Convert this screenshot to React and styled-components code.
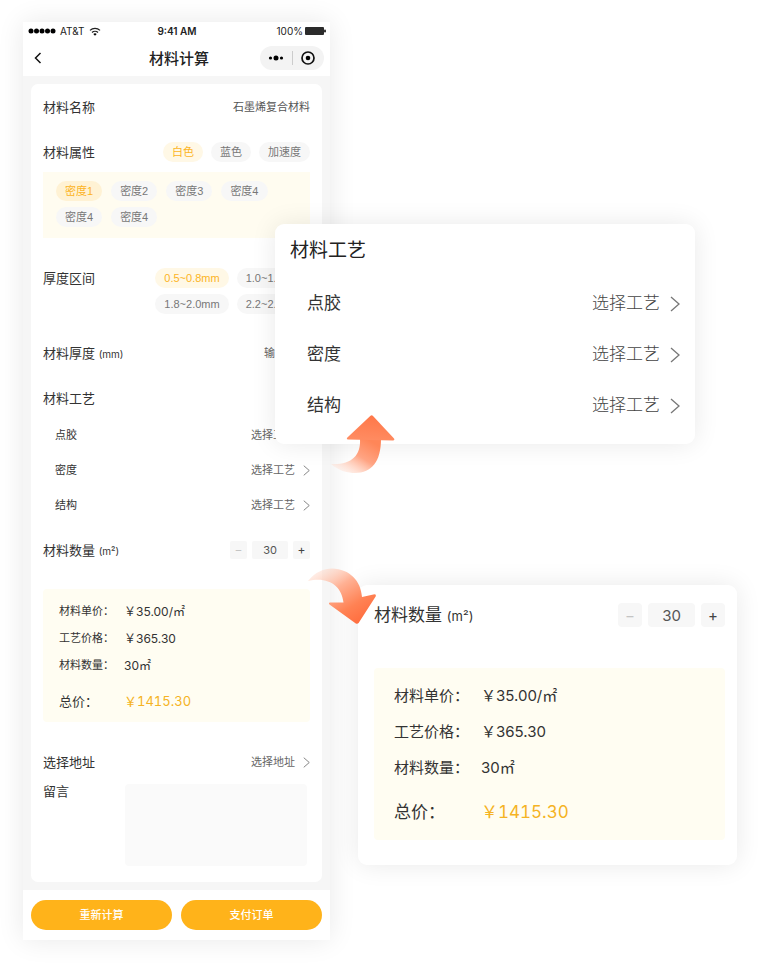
import React, { useState } from 'react';
import styled, { createGlobalStyle, css } from 'styled-components';

const COLORS = ['白色', '蓝色', '加速度'];
const DENSITIES = ['密度1', '密度2', '密度3', '密度4', '密度4', '密度4'];
const RANGES = ['0.5~0.8mm', '1.0~1.5mm', '1.8~2.0mm', '2.2~2.5mm'];
const CRAFTS = ['点胶', '密度', '结构'];

const ChipGroup = ({ items }) => {
  const [active, setActive] = useState(0);
  return items.map((item, index) => (
    <Chip
      key={index}
      type="button"
      $active={index === active}
      onClick={() => setActive(index)}
    >
      {item}
    </Chip>
  ));
};

const Arrow = ({ large }) => (
  <Chevron viewBox="0 0 10 16" $large={large} aria-hidden="true">
    <path d="M1 1l8 7-8 7" />
  </Chevron>
);

const CraftList = ({ large }) =>
  CRAFTS.map(name => (
    <CraftRow key={name} $large={large}>
      <span>{name}</span>
      <Picker type="button" $large={large} aria-label={`${name} 选择工艺`}>
        选择工艺
        <Arrow large={large} />
      </Picker>
    </CraftRow>
  ));

const Quantity = ({ large, count, setCount }) => (
  <Stepper $large={large}>
    <StepButton
      type="button"
      $large={large}
      $muted
      aria-label="减少"
      onClick={() => setCount(Math.max(0, Number(count) - 1))}
    >
      −
    </StepButton>
    <StepInput
      $large={large}
      aria-label="材料数量"
      value={count}
      onChange={e => setCount(e.target.value)}
    />
    <StepButton
      type="button"
      $large={large}
      aria-label="增加"
      onClick={() => setCount(Number(count) + 1)}
    >
      +
    </StepButton>
  </Stepper>
);

const Summary = ({ large, count }) => (
  <SummaryBox $large={large}>
    <SummaryLine $large={large}>
      <dt>材料单价：</dt>
      <dd>￥35.00/㎡</dd>
    </SummaryLine>
    <SummaryLine $large={large}>
      <dt>工艺价格：</dt>
      <dd>￥365.30</dd>
    </SummaryLine>
    <SummaryLine $large={large}>
      <dt>材料数量：</dt>
      <dd>{count}㎡</dd>
    </SummaryLine>
    <TotalLine $large={large}>
      <dt>总价：</dt>
      <dd>￥1415.30</dd>
    </TotalLine>
  </SummaryBox>
);

const App = () => {
  const [count, setCount] = useState(30);

  return (
    <Stage>
      <GlobalStyle />
      <Phone>
        <StatusBar>
          <Carrier>
            <svg width="28" height="6" viewBox="0 0 28 6" aria-hidden="true">
              {[3, 8.5, 14, 19.5, 25].map(x => (
                <circle key={x} cx={x} cy="3" r="2.5" />
              ))}
            </svg>
            AT&T
            <svg width="12" height="9" viewBox="0 0 12 9" aria-hidden="true">
              <g fill="none" stroke="#222" strokeWidth="1.3">
                <path d="M1 3.4a7.2 7.2 0 0 1 10 0" />
                <path d="M3 5.5a4.3 4.3 0 0 1 6 0" />
              </g>
              <path d="M6 8.8L4.3 7a2.4 2.4 0 0 1 3.4 0z" />
            </svg>
          </Carrier>
          <Time>9:41 AM</Time>
          <Battery>
            100%
            <svg width="21" height="8" viewBox="0 0 21 8" aria-hidden="true">
              <rect width="19" height="8" rx="1" fill="#2b2b2b" />
              <rect x="19" y="2.5" width="2" height="3" rx="1" fill="#2b2b2b" />
            </svg>
          </Battery>
        </StatusBar>

        <NavBar>
          <Back type="button" aria-label="返回">
            <svg width="8" height="12" viewBox="0 0 8 12">
              <path
                d="M6.5 1L1.5 6l5 5"
                fill="none"
                stroke="#111"
                strokeWidth="1.5"
              />
            </svg>
          </Back>
          <NavTitle>材料计算</NavTitle>
          <Capsule>
            <CapsuleButton type="button" aria-label="更多">
              <svg width="16" height="6" viewBox="0 0 16 6">
                <circle cx="2.5" cy="3" r="1.6" />
                <circle cx="8" cy="3" r="2.5" />
                <circle cx="13.5" cy="3" r="1.6" />
              </svg>
            </CapsuleButton>
            <CapsuleButton type="button" aria-label="关闭">
              <svg width="14" height="14" viewBox="0 0 14 14">
                <circle
                  cx="7"
                  cy="7"
                  r="6"
                  fill="none"
                  stroke="#111"
                  strokeWidth="1.7"
                />
                <circle cx="7" cy="7" r="2.3" />
              </svg>
            </CapsuleButton>
          </Capsule>
        </NavBar>

        <Card>
          <Row>
            <Label>材料名称</Label>
            <Value>石墨烯复合材料</Value>
          </Row>
          <Row>
            <Label>材料属性</Label>
            <Chips>
              <ChipGroup items={COLORS} />
            </Chips>
          </Row>
          <DensityBox>
            <ChipGroup items={DENSITIES} />
          </DensityBox>

          <RangeRow>
            <Label>厚度区间</Label>
            <RangeChips>
              <ChipGroup items={RANGES} />
            </RangeChips>
          </RangeRow>

          <Row>
            <Label as="label" htmlFor="thickness">
              材料厚度 <Unit>(mm)</Unit>
            </Label>
            <ThicknessInput id="thickness" placeholder="输入厚度" />
          </Row>

          <Row>
            <Label>材料工艺</Label>
          </Row>
          <CraftList />

          <QuantityRow>
            <Label>
              材料数量 <Unit>(m²)</Unit>
            </Label>
            <Quantity count={count} setCount={setCount} />
          </QuantityRow>
          <Summary count={count} />

          <AddressRow>
            <Label>选择地址</Label>
            <Picker type="button">
              选择地址
              <Arrow />
            </Picker>
          </AddressRow>
          <MessageRow>
            <Label as="label" htmlFor="message">
              留言
            </Label>
            <Message id="message" />
          </MessageRow>
        </Card>

        <Footer>
          <Submit type="button">重新计算</Submit>
          <Submit type="button">支付订单</Submit>
        </Footer>
      </Phone>

      <Callouts>
        <CraftCallout>
          <CalloutTitle>材料工艺</CalloutTitle>
          <CraftList large />
          <UpArrow viewBox="0 0 64 59" aria-hidden="true">
            <defs>
              <linearGradient id="up" x1="0.9" y1="0" x2="0.1" y2="0.9">
                <stop offset="0.1" stopColor="#ff8658" />
                <stop offset="0.5" stopColor="#ffa483" />
                <stop offset="1" stopColor="#ffe0d3" stopOpacity="0.3" />
              </linearGradient>
              <linearGradient id="upHead" x1="0.6" y1="0" x2="0.4" y2="1">
                <stop offset="0" stopColor="#ff7748" />
                <stop offset="1" stopColor="#ff8c62" />
              </linearGradient>
            </defs>
            <path
              d="M29 24C30 41 20 50 0 49C8 56 17 58 24 58C41 58 50 46 50 24Z"
              fill="url(#up)"
            />
            <path
              d="M39.5 0.8Q40.7 -0.2 42 0.9L63 23.4Q64 25.3 62 25.4L17 24.6Q15 24 16.4 22.4Z"
              fill="url(#upHead)"
            />
          </UpArrow>
        </CraftCallout>

        <QuantityCallout>
          <DownArrow viewBox="0 0 69 57" aria-hidden="true">
            <defs>
              <linearGradient id="down" x1="0" y1="0.1" x2="0.7" y2="1">
                <stop offset="0" stopColor="#ffe0d3" stopOpacity="0.4" />
                <stop offset="0.4" stopColor="#ffb194" />
                <stop offset="0.75" stopColor="#ff8254" />
                <stop offset="1" stopColor="#ff6f40" />
              </linearGradient>
            </defs>
            <path
              d="M0 13C7 4 16 0.5 24 0.5C42 1 53 13 54 29L66.5 26.2Q68.5 26.4 67.8 28.2L50.6 55Q49.4 56.4 47.8 55.4L21.5 36.6Q20.2 34.8 22 34.6L35.5 34.5C34 18 20 8 0 13Z"
              fill="url(#down)"
            />
          </DownArrow>
          <QuantityHead>
            <Label $large>
              材料数量 <Unit $large>(m²)</Unit>
            </Label>
            <Quantity large count={count} setCount={setCount} />
          </QuantityHead>
          <Summary large count={count} />
        </QuantityCallout>
      </Callouts>
    </Stage>
  );
};

export default App;

const GlobalStyle = createGlobalStyle`
  * {
    box-sizing: border-box;
  }

  body {
    margin: 0;
    background-color: #ffffff;
    color: #333333;
    font-family: Inter, "Noto Sans CJK SC", sans-serif;
    font-size: 12px;
    line-height: 1;
  }

  button,
  input,
  textarea {
    padding: 0;
    border: none;
    outline: none;
    background: none;
    color: inherit;
    font-family: inherit;
    font-size: inherit;
    line-height: inherit;
  }

  button {
    cursor: pointer;
  }
`;

const Stage = styled.main`
  display: flex;
  align-items: flex-start;
  padding: 22px 24px 24px 23px;
`;

const Phone = styled.section`
  flex: 43 1 0;
  min-width: 0;
  background-color: #f6f6f6;
  box-shadow: 0 0 26px rgba(0, 0, 0, 0.09);
`;

const StatusBar = styled.div`
  display: grid;
  grid-template-columns: 1fr auto 1fr;
  align-items: center;
  height: 18px;
  padding: 0 4px 0 5px;
  background-color: #ffffff;
  color: #222222;
  font-size: 10px;
`;

const Carrier = styled.div`
  display: flex;
  align-items: center;
  gap: 4px;
`;

const Time = styled.div`
  font-weight: 600;
`;

const Battery = styled.div`
  display: flex;
  align-items: center;
  justify-content: flex-end;
  gap: 2px;
`;

const NavBar = styled.header`
  display: grid;
  grid-template-columns: 1fr auto 1fr;
  align-items: center;
  height: 36px;
  padding: 0 6px 0 11px;
  background-color: #ffffff;
`;

const Back = styled.button`
  display: flex;
  justify-self: start;
`;

const NavTitle = styled.h1`
  margin: 0;
  color: #222222;
  font-size: 15px;
  font-weight: 500;
`;

const Capsule = styled.div`
  display: flex;
  justify-self: end;
  width: 64px;
  height: 24px;
  border-radius: 12px;
  background-color: #f3f3f3;
`;

const CapsuleButton = styled.button`
  display: flex;
  flex: 1;
  align-items: center;
  justify-content: center;

  & + & {
    position: relative;
  }

  & + &::before {
    content: '';
    position: absolute;
    left: 0;
    width: 1px;
    height: 14px;
    background-color: #cccccc;
  }
`;

const Card = styled.div`
  margin: 8px;
  padding: 3px 12px 16px;
  border-radius: 7px;
  background-color: #ffffff;
`;

const Row = styled.div`
  display: flex;
  align-items: center;
  justify-content: space-between;
  height: 40px;
  margin-top: 5px;

  &:first-child {
    margin-top: 0;
  }
`;

const Label = styled.span`
  font-size: ${props => (props.$large ? 17 : 13)}px;
  white-space: nowrap;
`;

const Unit = styled.small`
  font-size: ${props => (props.$large ? 13 : 10)}px;
`;

const Value = styled.span`
  color: #555555;
  font-size: 11px;
`;

const Chips = styled.div`
  display: flex;
  gap: 8px;
`;

const Chip = styled.button`
  height: 20px;
  padding: 0 9px;
  border-radius: 10px;
  background-color: #f7f7f7;
  color: #777777;
  font-family: 'Liberation Sans', 'Noto Sans CJK SC', sans-serif;
  font-size: 11px;
  line-height: 20px;
  white-space: nowrap;

  ${props =>
    props.$active &&
    css`
      background-color: #fff8e6;
      color: #fcb41f;
    `}
`;

const DensityBox = styled.div`
  display: flex;
  flex-wrap: wrap;
  gap: 6px 9px;
  padding: 9px 30px 11px 13px;
  background-color: #fffcf0;

  ${Chip}:first-child {
    background-color: #fff2d4;
  }
`;

const RangeRow = styled.div`
  display: flex;
  justify-content: space-between;
  margin: 30px 0 19px;
  line-height: 20px;
`;

const RangeChips = styled.div`
  display: grid;
  grid-template-columns: auto auto;
  gap: 6px 8px;
`;

const ThicknessInput = styled.input`
  width: 46px;
  color: #555555;
  font-size: 11px;

  &::placeholder {
    color: #666666;
    opacity: 1;
  }
`;

const CraftRow = styled.div`
  display: flex;
  align-items: center;
  justify-content: space-between;
  height: ${props => (props.$large ? 51 : 35)}px;
  padding-left: ${props => (props.$large ? 17 : 12)}px;
  font-size: ${props => (props.$large ? 17 : 11)}px;
`;

const Picker = styled.button`
  display: flex;
  align-items: center;
  gap: ${props => (props.$large ? 10 : 8)}px;
  color: ${props => (props.$large ? '#444444' : '#666666')};
  font-size: ${props => (props.$large ? 17 : 11)}px;
  font-weight: ${props => (props.$large ? 300 : 400)};
`;

const Chevron = styled.svg`
  width: ${props => (props.$large ? 10 : 7)}px;
  height: ${props => (props.$large ? 16 : 11)}px;
  fill: none;
  stroke: #777777;
  stroke-width: 1.3;
`;

const Stepper = styled.div`
  display: flex;
  gap: ${props => (props.$large ? 6 : 5)}px;
`;

const StepButton = styled.button`
  width: ${props => (props.$large ? 24 : 17)}px;
  height: ${props => (props.$large ? 24 : 18)}px;
  border-radius: ${props => (props.$large ? 4 : 2)}px;
  background-color: #f7f7f7;
  color: ${props => (props.$muted ? '#c4c4c4' : '#444444')};
  font-size: ${props => (props.$large ? 15 : 12)}px;
`;

const StepInput = styled.input`
  width: ${props => (props.$large ? 47 : 36)}px;
  height: ${props => (props.$large ? 24 : 18)}px;
  border-radius: ${props => (props.$large ? 4 : 2)}px;
  background-color: #f7f7f7;
  color: #555555;
  font-size: ${props => (props.$large ? 15 : 11)}px;
  text-align: center;
`;

const SummaryBox = styled.dl`
  margin: ${props => (props.$large ? '23px 0 0' : '19px 0 0')};
  padding: ${props => (props.$large ? '9px 20px' : '9px 16px 7px')};
  border-radius: 4px;
  background-color: #fffdf2;
`;

const SummaryLine = styled.div`
  display: flex;
  align-items: center;
  height: ${props => (props.$large ? 36 : 27)}px;
  font-size: ${props => (props.$large ? 15 : 11)}px;

  dt {
    flex: 0 0 ${props => (props.$large ? 87 : 65)}px;
  }

  dd {
    margin: 0;
    font-size: ${props => (props.$large ? 15 : 12)}px;
  }
`;

const TotalLine = styled(SummaryLine)`
  height: ${props => (props.$large ? 38 : 28)}px;
  margin-top: 8px;
  font-size: ${props => (props.$large ? 17 : 13)}px;

  dd {
    color: #f5b324;
    font-size: inherit;
    font-variant-numeric: tabular-nums;
  }
`;

const QuantityRow = styled(Row)`
  margin-top: 7px;
`;

const AddressRow = styled(Row)`
  margin-top: 20px;
`;

const MessageRow = styled.div`
  display: flex;
  align-items: flex-start;
  justify-content: space-between;
  padding-right: 3px;
  line-height: 18px;
`;

const Message = styled.textarea`
  width: 69%;
  height: 82px;
  margin-top: 2px;
  border-radius: 4px;
  background-color: #fafafa;
  resize: none;
`;

const Footer = styled.footer`
  display: flex;
  gap: 9px;
  padding: 10px 8px;
  background-color: #ffffff;
`;

const Submit = styled.button`
  flex: 1;
  height: 30px;
  border-radius: 15px;
  background-color: #ffb31a;
  color: #ffffff;
  font-size: 11px;
  font-weight: 500;
`;

const Callouts = styled.div`
  flex: 57 1 0;
  min-width: 0;
  padding-top: 202px;
`;

const Callout = styled.section`
  position: relative;
  border-radius: 9px;
  background-color: #ffffff;
  box-shadow: 0 0 26px rgba(0, 0, 0, 0.09);
`;

// sits partly over the phone
const CraftCallout = styled(Callout)`
  margin: 0 42px 0 -55px;
  padding: 0 15px 13px;
`;

const CalloutTitle = styled.h2`
  margin: 0;
  color: #222222;
  font-size: 19px;
  font-weight: 400;
  line-height: 54px;
`;

const QuantityCallout = styled(Callout)`
  margin: 141px 0 0 28px;
  padding: 0 12px 25px 16px;
`;

const QuantityHead = styled.div`
  position: relative;
  display: flex;
  align-items: center;
  justify-content: space-between;
  height: 60px;
`;

const UpArrow = styled.svg`
  position: absolute;
  top: 191px;
  left: 56px;
  width: 64px;
  height: 59px;
  overflow: visible;
`;

const DownArrow = styled.svg`
  position: absolute;
  top: -17px;
  left: -50px;
  width: 69px;
  height: 57px;
  overflow: visible;
`;
